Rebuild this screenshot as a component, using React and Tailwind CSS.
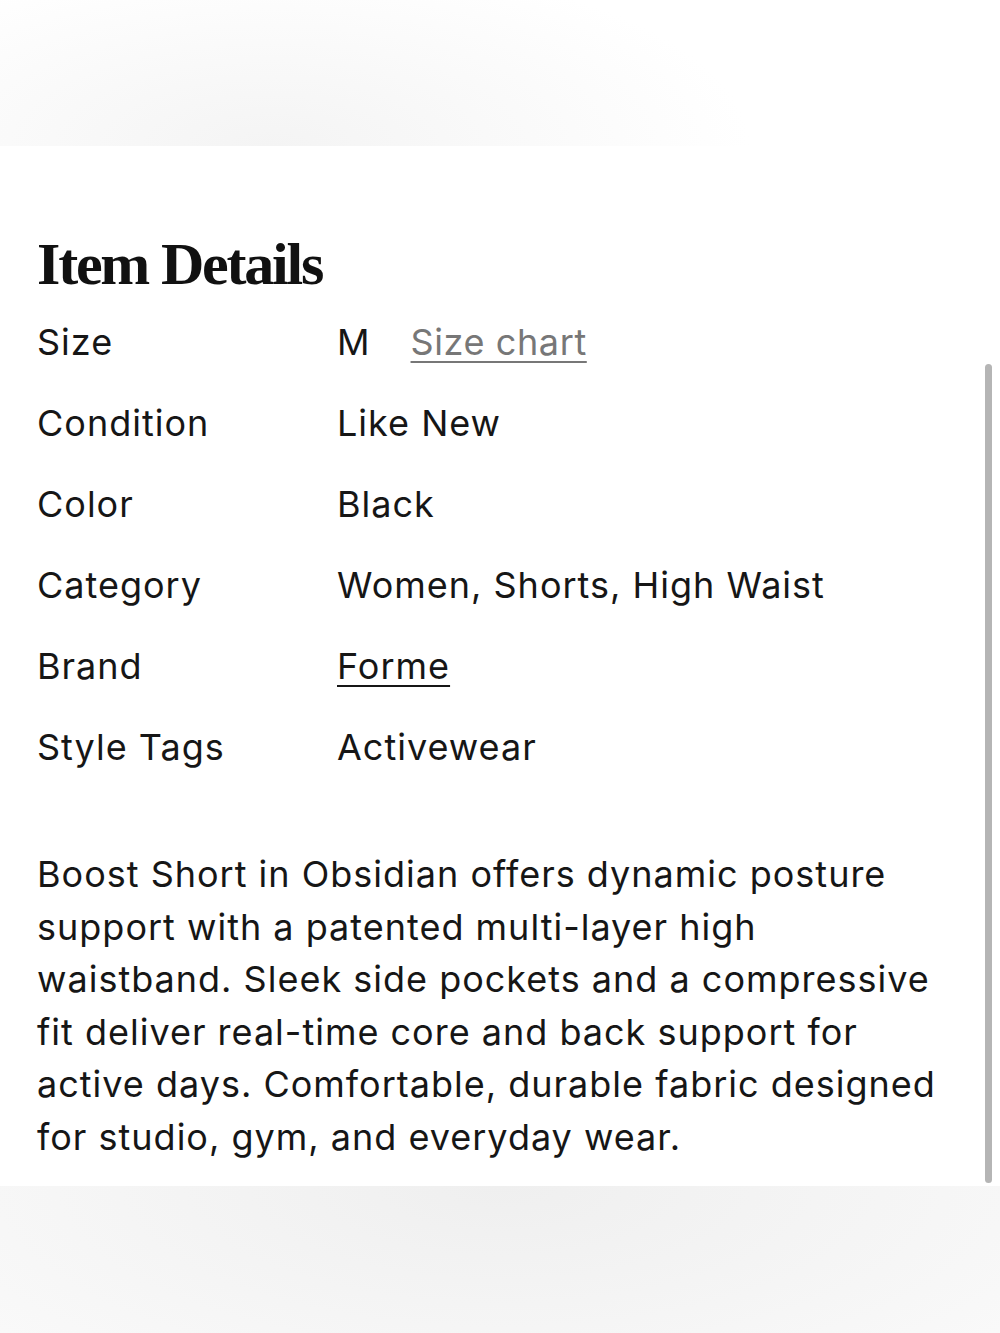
import React from "react";

const rows = [
  { label: "Size", value: "M", extra: "Size chart" },
  { label: "Condition", value: "Like New" },
  { label: "Color", value: "Black" },
  { label: "Category", value: "Women, Shorts, High Waist" },
  { label: "Brand", value: "Forme", link: true },
  { label: "Style Tags", value: "Activewear" },
];

const App = () => {
  return (
    <div className="relative flex flex-col min-h-[1333px] w-[1000px] bg-white text-[#161616] font-['Inter',sans-serif] overflow-hidden">
      {/* top fade */}
      <div className="h-[146px] shrink-0 bg-[radial-gradient(ellipse_480px_190px_at_270px_146px,#f4f4f4,#ffffff)]" />

      <div className="px-[37px] pt-[82px] pb-[23px]">
        <h1 className="font-['Liberation_Serif',serif] font-bold text-[60px] leading-[72px] tracking-[-2.2px] text-[#111]">
          Item Details
        </h1>

        {/* details */}
        <div className="mt-[2px] flex flex-col tracking-[1px]">
          {rows.map((r) => (
            <div key={r.label} className="flex items-baseline h-[81px] text-[36px] leading-[81px]">
              <div className="w-[300px] shrink-0">{r.label}</div>
              <div className="flex items-baseline gap-[40px]">
                <span className={r.link ? "underline underline-offset-[6px] decoration-[2px]" : ""}>{r.value}</span>
                {r.extra && (
                  <span className="text-[#777] underline underline-offset-[6px] decoration-[2px] tracking-[0.6px]">{r.extra}</span>
                )}
              </div>
            </div>
          ))}
        </div>

        <p className="mt-[60px] text-[36px] leading-[52.5px] tracking-[1px] w-[910px]">
          Boost Short in Obsidian offers dynamic posture support with a patented multi-layer high waistband. Sleek side pockets and a compressive fit deliver real-time core and back support for active days. Comfortable, durable fabric designed for studio, gym, and everyday wear.
        </p>
      </div>

      {/* bottom fade */}
      <div className="flex-1 bg-[radial-gradient(ellipse_700px_260px_at_500px_0px,#efefef,#fafafa)]" />

      {/* scrollbar */}
      <div className="absolute left-[985px] top-[364px] w-[7px] h-[819px] rounded-full bg-[#b5b5b5]" />
    </div>
  );
};

export default App;
